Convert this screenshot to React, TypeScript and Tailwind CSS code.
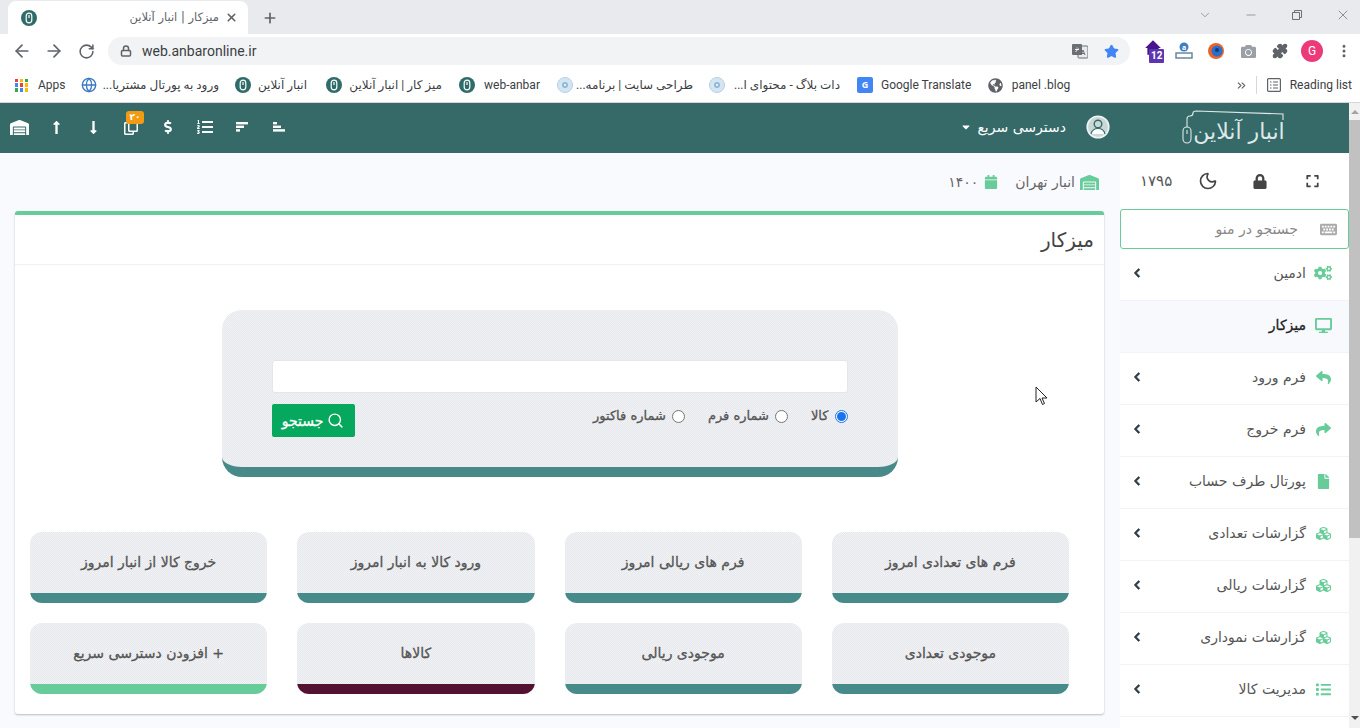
import React from "react";
import { ArrowLeft, ArrowRight, RotateCw, Lock, Star, Puzzle, Search, Moon, X, Plus, Minus, ChevronDown, EllipsisVertical, Globe, ChevronsRight } from "lucide-react";
import { FaWarehouse, FaLongArrowAltUp, FaLongArrowAltDown, FaRegCopy, FaDollarSign, FaListOl, FaCogs, FaDesktop, FaReply, FaShare, FaFile, FaCubes, FaList, FaCalendar, FaLock, FaExpand, FaKeyboard, FaChevronLeft, FaCaretDown, FaGlobeAmericas, FaCamera } from "react-icons/fa";

const fa = "font-['DejaVu_Sans','Noto_Sans',sans-serif]";
const ui = "font-['Roboto','DejaVu_Sans',sans-serif]";
const heavy = "[-webkit-text-stroke:0.3px_currentColor]";

function Fav({ className = "" }: { className?: string }) {
  return (
    <svg viewBox="0 0 16 16" className={"w-4 h-4 shrink-0 " + className}>
      <circle cx="8" cy="8" r="8" fill="#2f6b69" />
      <rect x="5.2" y="3.2" width="5.6" height="9.6" rx="2.8" fill="none" stroke="#fff" strokeWidth="1.2" />
      <line x1="8" y1="5" x2="8" y2="8" stroke="#fff" strokeWidth="1.2" />
    </svg>
  );
}

function Disc() {
  return (
    <svg viewBox="0 0 16 16" className="w-4 h-4 shrink-0">
      <circle cx="8" cy="8" r="7.5" fill="#d5e6f3" stroke="#b8cfe0" />
      <circle cx="8" cy="8" r="3" fill="#8db9dc" />
      <circle cx="8" cy="8" r="1" fill="#fff" />
    </svg>
  );
}

function Mark({ icon, text, w, gap }: { icon: React.ReactNode; text: string; w: string; gap: string }) {
  return (
    <div className={"flex items-center gap-2 shrink-0 " + gap}>
      {icon}
      <span dir="auto" className={"text-xs text-[#3c4043] whitespace-nowrap text-center " + ui + " " + w}>{text}</span>
    </div>
  );
}

function TabStrip() {
  return (
    <div className="h-[34px] bg-[#e8eaed] flex items-end shrink-0">
      <div className="ml-2 w-[240px] h-[33px] bg-white rounded-t-lg flex items-center pl-[13px] pr-[10px]">
        <Fav />
        <span dir="rtl" className={"ml-auto text-[11.5px] text-[#5f6368] whitespace-nowrap " + fa}>میزکار | انبار آنلاین</span>
        <X size={13} strokeWidth={3} className="ml-[6px] text-[#5f6368]" />
      </div>
      <div className="h-[33px] flex items-center ml-[14px]">
        <Plus size={16} strokeWidth={2.5} className="text-[#5f6368]" />
      </div>
      <div className="ml-auto -mr-[6px] h-[33px] flex items-center pb-[6px] text-[#5f6368]">
        <ChevronDown size={14} strokeWidth={1} className="w-[46px]" />
        <Minus size={14} strokeWidth={1} className="w-[46px]" />
        <svg viewBox="0 0 12 12" className="w-[46px] h-3"><path d="M1.5 3.5h7v7h-7zM3.5 3.5v-2h7v7h-2" fill="none" stroke="#5f6368" strokeWidth="0.9" /></svg>
        <X size={16} strokeWidth={1} className="w-[46px]" />
      </div>
    </div>
  );
}

function Toolbar() {
  return (
    <div className="h-[34px] bg-white flex items-center shrink-0 text-[#5f6368]">
      <div className="w-[108px] flex items-center pl-[12px] gap-[12px]">
        <ArrowLeft size={20} strokeWidth={2} />
        <ArrowRight size={20} strokeWidth={2} />
        <RotateCw size={17} strokeWidth={2.2} className="ml-[2px]" />
      </div>
      <div className="w-[1022px] h-[28px] rounded-full bg-[#f1f3f4] flex items-center pl-[12px] pr-[11px]">
        <Lock size={12} strokeWidth={3} className="text-[#5f6368]" />
        <span className={"ml-[10px] text-sm text-[#3c4043] " + ui}>web.anbaronline.ir</span>
        <svg viewBox="0 0 16 16" className="ml-auto mr-[16px] w-4 h-4">
          <rect x="6" y="3" width="10" height="12" rx="1" fill="#e8eaed" stroke="#6b6f74" />
          <rect x="0" y="1" width="10" height="11" rx="1" fill="#6b6f74" />
          <path d="M3 6.5h4M5 4.5v1M3.5 9 6.5 5.5" stroke="#fff" strokeWidth="0.9" fill="none" />
          <path d="M9 12l2-5 2 5M10 10.5h2" stroke="#5f6368" strokeWidth="0.9" fill="none" />
        </svg>
        <Star size={15} fill="#4285f4" stroke="#4285f4" />
      </div>
      <div className="flex-1 flex items-center pl-[14px]">
        <div className="w-[31px] relative h-[24px]">
          <svg viewBox="0 0 16 16" className="w-[18px] h-[18px]"><path d="M8 1 1 8h2v6h10V8h2z" fill="#4a148c" /></svg>
          <span className={"absolute left-[5px] top-[10px] bg-[#5e35b1] text-white text-[10px] leading-[14px] font-bold px-[2px] rounded-[1px] " + ui}>12</span>
        </div>
        <svg viewBox="0 0 18 18" className="w-[18px] h-[18px] mr-[14px]"><circle cx="9" cy="5" r="4.5" fill="#3f7fc1" /><text x="9" y="7.5" fontSize="7" textAnchor="middle" fill="#fff" fontWeight="bold">a</text><rect x="1" y="11" width="16" height="5" fill="none" stroke="#5f7f9a" strokeWidth="1.4" /></svg>
        <svg viewBox="0 0 18 18" className="w-[18px] h-[18px] mr-[16px]"><circle cx="9" cy="9" r="8" fill="#e8642c" /><circle cx="10" cy="9" r="5.5" fill="#2a6fc9" /><circle cx="10" cy="8" r="2" fill="#123a75" /></svg>
        <FaCamera size={15} className="mr-[16px] text-[#9aa0a6]" />
        <Puzzle size={16} fill="#5f6368" className="mr-[13px]" />
        <div className={"w-[22px] h-[22px] rounded-full bg-[#ec3a78] text-white text-xs flex items-center justify-center mr-[13px] " + ui}>G</div>
        <EllipsisVertical size={16} strokeWidth={2.5} />
      </div>
    </div>
  );
}

function Bookmarks() {
  return (
    <div className="h-[35px] bg-white border-b border-[#d5d7da] flex items-center pl-[15px] shrink-0">
      <div className="grid grid-cols-3 gap-[1.5px] w-[13px] h-[13px] mr-[10px]">
        {["#ea4335", "#fbbc04", "#34a853", "#4285f4", "#ea4335", "#fbbc04", "#34a853", "#4285f4", "#fbbc04"].map((c, i) => (
          <span key={i} style={{ background: c }} />
        ))}
      </div>
      <span className={"text-xs text-[#3c4043] mr-[16px] w-[27px] " + ui}>Apps</span>
      <Mark icon={<Globe size={16} className="text-[#3b78c4]" />} text="ورود به پورتال مشتریا..." w="w-[114px]" gap="mr-[16px]" />
      <Mark icon={<Fav />} text="انبار آنلاین" w="w-[48px]" gap="mr-[19px]" />
      <Mark icon={<Fav />} text="میز کار | انبار آنلاین" w="w-[92px]" gap="mr-[17px]" />
      <Mark icon={<Fav />} text="web-anbar" w="w-[58px]" gap="mr-[16px]" />
      <Mark icon={<Disc />} text="طراحی سایت | برنامه..." w="w-[112px]" gap="mr-[16px]" />
      <Mark icon={<Disc />} text="دات بلاگ - محتوای ا..." w="w-[108px]" gap="mr-[16px]" />
      <Mark icon={<div className="w-4 h-4 bg-[#4285f4] rounded-[2px] text-white text-[9px] font-bold flex items-center justify-center">G</div>} text="Google Translate" w="w-[90px]" gap="mr-[17px]" />
      <Mark icon={<FaGlobeAmericas size={15} className="text-[#5f6368]" />} text="panel .blog" w="w-[60px]" gap="" />
      <ChevronsRight size={13} strokeWidth={2} className="ml-auto text-[#5f6368]" />
      <div className="w-px h-[18px] bg-[#d5d7da] ml-[8px] mr-[10px]" />
      <svg viewBox="0 0 14 14" className="w-[14px] h-[14px] mr-[9px]" fill="none" stroke="#5f6368" strokeWidth="1.2">
        <rect x="0.6" y="0.6" width="12.8" height="12.8" rx="1" />
        <path d="M3 4h1.5M6 4h5M3 7h1.5M6 7h5M3 10h1.5M6 10h5" />
      </svg>
      <span className={"text-xs text-[#3c4043] mr-[8px] whitespace-nowrap " + ui}>Reading list</span>
    </div>
  );
}

function HIcon({ children }: { children: React.ReactNode }) {
  return <div className="w-[37px] flex items-center justify-center relative">{children}</div>;
}

function Header() {
  return (
    <div className="h-[50px] bg-[#356a68] flex items-center pl-px pb-[2px] text-white shrink-0">
      <HIcon><FaWarehouse size={19} /></HIcon>
      <HIcon><FaLongArrowAltUp size={15} /></HIcon>
      <HIcon><FaLongArrowAltDown size={15} /></HIcon>
      <HIcon>
        <FaRegCopy size={16} />
        <span className={"absolute top-[-8px] left-[14px] w-[18px] h-[13px] rounded-[3px] bg-[#f39c12] text-[9px] leading-[13px] text-center font-bold " + fa}>۲۰</span>
      </HIcon>
      <HIcon><FaDollarSign size={14} /></HIcon>
      <HIcon><FaListOl size={16} /></HIcon>
      <HIcon>
        <svg viewBox="0 0 12 10" className="w-3 h-[10px]" fill="#fff"><rect width="12" height="2.4" /><rect y="3.6" width="8" height="2.4" /><rect y="7.2" width="4" height="2.4" /></svg>
      </HIcon>
      <HIcon>
        <svg viewBox="0 0 12 10" className="w-3 h-[10px]" fill="#fff"><rect width="4" height="2.4" /><rect y="3.6" width="8" height="2.4" /><rect y="7.2" width="12" height="2.4" /></svg>
      </HIcon>
      <FaCaretDown size={12} className="ml-[663px]" />
      <span dir="rtl" className={"ml-[3px] text-sm whitespace-nowrap w-[91px] " + fa}>دسترسی سریع</span>
      <svg viewBox="0 0 24 24" className="ml-[20px] w-6 h-6">
        <circle cx="12" cy="12" r="10.8" fill="#c9d8d7" stroke="#eef3f3" strokeWidth="1.6" />
        <circle cx="12" cy="9" r="3.8" fill="none" stroke="#356a68" strokeWidth="1.4" />
        <path d="M5 19c1-4 4-5.5 7-5.5s6 1.5 7 5.5" fill="#fff" stroke="#356a68" strokeWidth="1.2" />
      </svg>
      <div className="relative ml-[72px] w-[104px] h-[36px] mt-[2px]">
        <svg viewBox="0 0 104 36" className="absolute inset-0 w-full h-full" fill="none" stroke="#dfe8e8" strokeWidth="1.1">
          <path d="M5 17 V9 Q5 6 8 6 Q11 6 11 3 Q11 1 14 1 L101 4 V10" />
          <rect x="1" y="17" width="8" height="16" rx="4" />
          <line x1="5" y1="20" x2="5" y2="24" />
        </svg>
        <span dir="rtl" className={"absolute right-0 top-[9px] left-[10px] text-[22px] leading-[26px] text-center text-[#dfe8e8] whitespace-nowrap " + fa}>انبار آنلاین</span>
      </div>
    </div>
  );
}

const menu = [
  { t: "فرم ورود", i: <FaReply size={15} /> },
  { t: "فرم خروج", i: <FaShare size={15} /> },
  { t: "پورتال طرف حساب", i: <FaFile size={15} /> },
  { t: "گزارشات تعدادی", i: <FaCubes size={15} /> },
  { t: "گزارشات ریالی", i: <FaCubes size={15} /> },
  { t: "گزارشات نموداری", i: <FaCubes size={15} /> },
  { t: "مدیریت کالا", i: <FaList size={15} /> },
];

function Row({ t, i, active }: { t: string; i: React.ReactNode; active?: boolean }) {
  return (
    <div className={"h-[52px] flex items-center pr-[17px] pl-[12px] pb-[3px] border-b border-[#f1f3f8] shrink-0" + (active ? " bg-[#f8f9fc]" : "")}>
      <span className="w-[18px] flex justify-center text-[#68cc9a]">{i}</span>
      <span className={"mr-2 text-sm whitespace-nowrap " + fa + (active ? " " + heavy + " text-[#222]" : " text-[#555]")}>{t}</span>
      {!active && <FaChevronLeft size={10} stroke="currentColor" strokeWidth={40} className="mr-auto text-[#2b3a45]" />}
    </div>
  );
}

function Sidebar() {
  return (
    <div dir="rtl" className="w-[229px] bg-white flex flex-col shrink-0">
      <div dir="ltr" className="h-[56px] flex items-center pl-[20px] shrink-0 text-[#444]">
        <span className={"w-[42px] text-[15px] text-[#555] whitespace-nowrap " + fa}>۱۷۹۵</span>
        <Moon size={20} strokeWidth={2} className="w-[52px]" />
        <FaLock size={15} className="w-[52px]" />
        <FaExpand size={14} className="w-[53px]" />
      </div>
      <div className="h-10 border border-[#68cc9a] rounded-[3px] flex items-center pr-[11px] shrink-0">
        <FaKeyboard size={17} className="text-[#aaa]" />
        <span className={"mr-[22px] text-sm text-[#888] " + fa}>جستجو در منو</span>
      </div>
      <Row t="ادمین" i={<FaCogs size={18} />} />
      <Row t="میزکار" i={<FaDesktop size={17} />} active />
      {menu.map((m) => <Row key={m.t} t={m.t} i={m.i} />)}
    </div>
  );
}

const noise = "bg-[repeating-conic-gradient(#e7e8ec_0_25%,#f1f2f5_0_50%)] bg-[length:2px_2px]";

function Radio({ label, on }: { label: string; on?: boolean }) {
  return (
    <label className="flex items-center gap-[6px]">
      <span className={"w-[13px] h-[13px] rounded-full border flex items-center justify-center bg-white " + (on ? "border-[#1a73e8]" : "border-[#767676]")}>
        {on && <span className="w-[9px] h-[9px] rounded-full bg-[#1a73e8]" />}
      </span>
      <span className={"text-[13px] text-[#555] whitespace-nowrap leading-[16px] " + heavy + " " + fa}>{label}</span>
    </label>
  );
}

function Tile({ t, bar = "bg-[#478a8a]" }: { t: string; bar?: string }) {
  return (
    <div className="h-[71px] rounded-[12px] overflow-hidden flex flex-col">
      <div className={"flex-1 flex items-center justify-center pb-[2px] " + noise}>
        <span dir="rtl" className={"text-sm text-[#555] whitespace-nowrap " + heavy + " " + fa}>{t}</span>
      </div>
      <div className={"h-[10px] " + bar} />
    </div>
  );
}

function Content() {
  return (
    <div className="w-[1120px] bg-[#f9fafe] flex flex-col pl-[15px] pr-[16px] shrink-0">
      <div dir="rtl" className="h-[58px] flex items-center pr-[5px] text-[#68cc9a] shrink-0">
        <FaWarehouse size={19} />
        <span className={"mr-[5px] text-sm text-[#666] " + fa}>انبار تهران</span>
        <FaCalendar size={14} className="mr-[17px]" />
        <span className={"mr-[6px] text-sm text-[#666] " + fa}>۱۴۰۰</span>
      </div>
      <div className="h-[503px] bg-white border-t-4 border-[#68cc9a] rounded-[3px] shadow-[0_1px_2px_rgba(0,0,0,0.25)] shrink-0">
        <div dir="rtl" className="h-[50px] border-b border-[#f1f1f4] flex items-center pr-[10px]">
          <span className={"text-xl text-[#444] " + fa}>میزکار</span>
        </div>
        <div className={"mt-[45px] mx-auto w-[676px] h-[167px] rounded-[20px] border-b-[10px] border-[#478a8a] px-[50px] pt-[50px] " + noise}>
          <div className="h-[33px] bg-white rounded-[3px] border border-[#e6e6ea]" />
          <div className="mt-[11px] flex items-start justify-between">
            <button className={"w-[83px] h-[33px] rounded-[2px] bg-[#05a85c] text-white text-sm flex items-center justify-center gap-[4px] " + heavy + " " + fa}>
              <span>جستجو</span>
              <Search size={17} />
            </button>
            <div dir="rtl" className="flex items-center gap-[23px] pt-[4px]">
              <Radio label="کالا" on />
              <Radio label="شماره فرم" />
              <Radio label="شماره فاکتور" />
            </div>
          </div>
        </div>
        <div dir="rtl" className="mt-[55px] pr-[35px] pl-[15px] grid grid-cols-4 gap-x-[30px] gap-y-[20px]">
          <Tile t="فرم های تعدادی امروز" />
          <Tile t="فرم های ریالی امروز" />
          <Tile t="ورود کالا به انبار امروز" />
          <Tile t="خروج کالا از انبار امروز" />
          <Tile t="موجودی تعدادی" />
          <Tile t="موجودی ریالی" />
          <Tile t="کالاها" bar="bg-[#541233]" />
          <Tile t="+ افزودن دسترسی سریع" bar="bg-[#68cc9a]" />
        </div>
      </div>
    </div>
  );
}

function Scrollbar() {
  return (
    <div className="w-[11px] bg-[#f1f1f1] flex flex-col items-center shrink-0">
      <div className="h-[17px] flex items-center justify-center">
        <span className="border-x-[4px] border-x-transparent border-b-[4px] border-b-[#a3a3a3]" />
      </div>
      <div className="w-full h-[418px] bg-[#c1c1c1]" />
      <div className="mt-auto h-[17px] flex items-center justify-center mb-[2px]">
        <span className="border-x-[4px] border-x-transparent border-t-[4px] border-t-[#505050]" />
      </div>
    </div>
  );
}

export default function App() {
  return (
    <div className="w-[1360px] h-[728px] overflow-hidden flex flex-col relative bg-white">
      <TabStrip />
      <Toolbar />
      <Bookmarks />
      <div className="flex-1 flex min-h-0">
        <div className="w-[1349px] flex flex-col shrink-0">
          <Header />
          <div className="flex flex-1 min-h-0 overflow-hidden">
            <Content />
            <Sidebar />
          </div>
        </div>
        <Scrollbar />
      </div>
      <svg viewBox="0 0 13 20" className="absolute left-[1035px] top-[386px] w-[13px] h-5">
        <path d="M1 1v15l4-3.5 2.5 6 2-1-2.5-5.5h5z" fill="#fff" stroke="#222" strokeWidth="1" />
      </svg>
    </div>
  );
}
